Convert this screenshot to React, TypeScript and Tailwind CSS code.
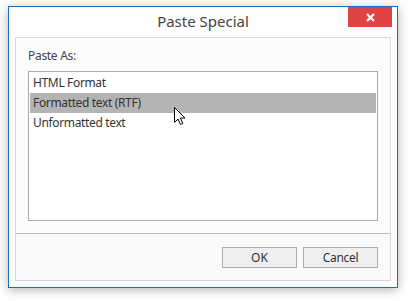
export default function App() {
  const items = ["HTML Format", "Formatted text (RTF)", "Unformatted text"];
  const selected = 1;

  return (
    <div className="w-[410px] h-[301px] bg-white pl-2 pt-1.5 font-['Noto_Sans',sans-serif]">
      {/* Dialog window */}
      <div className="relative flex flex-col w-[390px] h-[282px] border border-[#1c6ec0] bg-white shadow-[0_2px_10px_rgba(0,0,0,0.3)]">
        {/* Title bar */}
        <div className="relative h-[30px] flex items-center justify-center text-[15px] text-[#444] pb-[2px]">
          Paste Special
          <button className="absolute right-[5px] top-0 w-[44px] h-[20px] bg-[#e04343] flex items-center justify-center">
            <svg width="9" height="9" viewBox="0 0 9 9">
              <path d="M1 1 L8 8 M8 1 L1 8" stroke="white" strokeWidth="2.2" />
            </svg>
          </button>
        </div>

        {/* Content panel */}
        <div className="flex-1 mx-[6px] mb-[6px] border border-[#d9d9d9] flex flex-col">
          <div className="flex-1 bg-[#fbfbfb] px-3 pt-[10px] flex flex-col">
            <div className="h-4 leading-4 text-xs tracking-[-0.3px] text-[#444] mb-[7px]">Paste As:</div>
            <div className="relative h-[150px] border border-[#ababab] bg-white p-px">
              {items.map((item, i) => (
                <div
                  key={item}
                  className={`h-5 leading-5 px-[3px] text-xs tracking-[-0.35px] text-[#333] ${
                    i === selected ? "bg-[#b4b4b4]" : ""
                  }`}
                >
                  {item}
                </div>
              ))}
              {/* Mouse pointer */}
              <svg
                className="absolute left-[145px] top-[35px]"
                width="13"
                height="20"
                viewBox="0 0 13 20"
              >
                <path
                  d="M0.5 0.5 L0.5 15.5 L4 12 L6.5 17.5 L8.8 16.5 L6.3 11 L11 11 Z"
                  fill="white"
                  stroke="black"
                  strokeWidth="1"
                />
              </svg>
            </div>
          </div>

          {/* Buttons */}
          <div className="h-[47px] border-t border-[#bdbdbd] bg-[#fafafa] flex justify-end items-start gap-[6px] pt-[13px] pr-3">
            <button className="w-[75px] h-[21px] border border-[#adadad] bg-[#efefef] text-xs text-[#333]">
              OK
            </button>
            <button className="w-[75px] h-[21px] border border-[#adadad] bg-[#efefef] text-xs tracking-[-0.3px] text-[#333]">
              Cancel
            </button>
          </div>
        </div>
      </div>
    </div>
  );
}
